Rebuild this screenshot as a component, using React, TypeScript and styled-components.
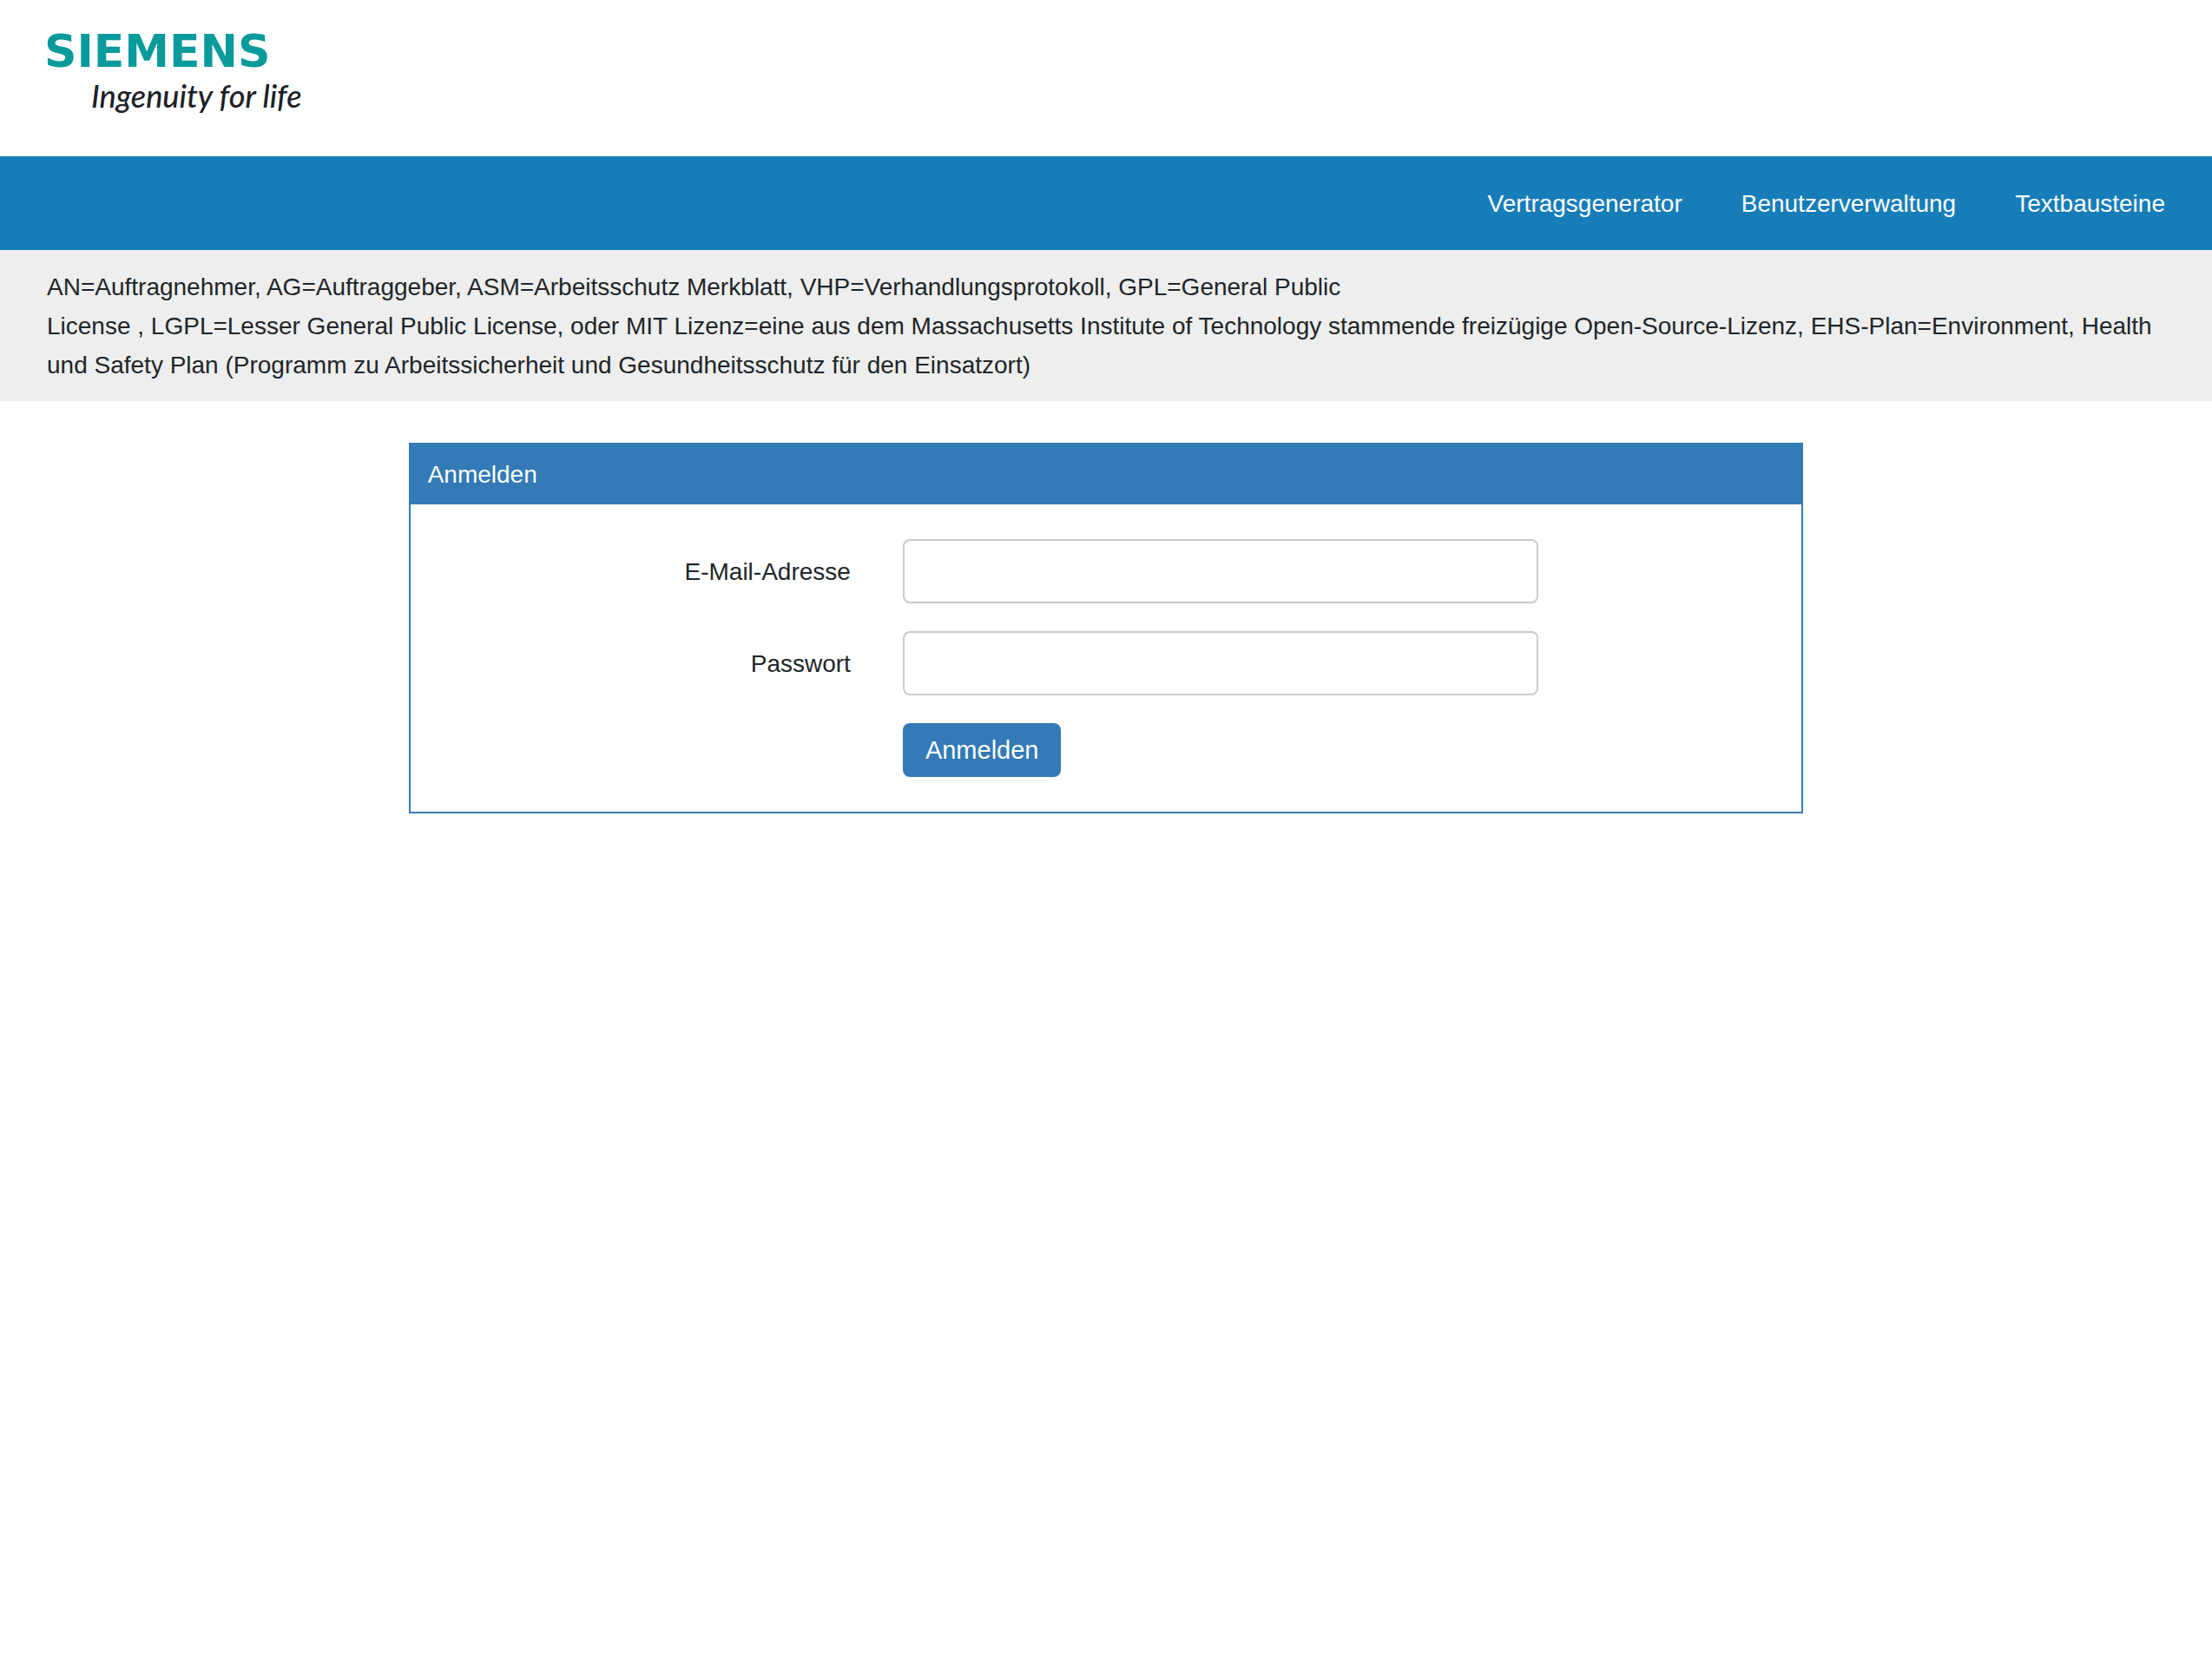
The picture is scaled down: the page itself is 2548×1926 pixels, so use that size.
import React from "react";
import styled, { createGlobalStyle } from "styled-components";

const GlobalStyle = createGlobalStyle`
  *, *::before, *::after { box-sizing: border-box; }
  body {
    margin: 0;
    background: #fff;
    color: #212529;
    font-family: "Liberation Sans", Arial, sans-serif;
    font-size: 28px;
    line-height: 45px;
  }
`;

const Header = styled.header`
  padding: 36px 54px 40px;
`;

const HomeLink = styled.a`
  display: inline-block;
  vertical-align: top;
`;

const LogoSvg = styled.svg`
  display: block;
  width: 304px;
  height: 104px;
  overflow: visible;
`;

const Wordmark = styled.text`
  fill: #099a9b;
  font-family: "DejaVu Sans", sans-serif;
  font-size: 52px;
  font-weight: 700;
`;

const Tagline = styled.text`
  fill: #1c2126;
  font-family: Lato, sans-serif;
  font-size: 36px;
  font-style: italic;
  font-weight: 500;
`;

const Nav = styled.nav`
  display: flex;
  justify-content: flex-end;
  align-items: center;
  gap: 68px;
  min-height: 108px;
  padding: 0 54px;
  background: #177db9;
`;

const NavLink = styled.a`
  color: #fff;
  text-decoration: none;
`;

const Notice = styled.p`
  margin: 0;
  padding: 20px 54px 19px;
  background: #eee;
`;

const Main = styled.main`
  display: grid;
  grid-template-columns: repeat(12, minmax(0, 1fr));
  column-gap: 60px;
  padding: 48px 54px;
`;

const Panel = styled.section`
  grid-column: 3 / span 8;
  border: 2px solid #337ab7;
`;

const PanelTitle = styled.h1`
  margin: 0;
  padding: 12px 20px;
  background: #337ab7;
  color: #fff;
  font-size: 28px;
  font-weight: 400;
`;

const Form = styled.form`
  display: grid;
  grid-template-columns: repeat(12, minmax(0, 1fr));
  gap: 32px 60px;
  align-items: center;
  padding: 40px 39px;
`;

const Label = styled.label`
  grid-column: 1 / span 4;
  text-align: right;
`;

const Field = styled.input`
  grid-column: 5 / span 6;
  width: 100%;
  height: 74px;
  padding: 12px 24px;
  border: 2px solid #c8cccc;
  border-radius: 8px;
  background: #fff;
  color: inherit;
  font: inherit;
`;

const SubmitButton = styled.button`
  grid-column: 5 / span 6;
  justify-self: start;
  height: 62px;
  padding: 0 24px;
  border: 2px solid #337ab7;
  border-radius: 8px;
  background: #337ab7;
  color: #fff;
  font-family: inherit;
  font-size: 29px;
  cursor: pointer;
`;

const links = ["Vertragsgenerator", "Benutzerverwaltung", "Textbausteine"];

function Logo() {
  return (
    <LogoSvg viewBox="0 0 304 104" role="img" aria-label="Siemens">
      <Wordmark x="-3" y="41">SIEMENS</Wordmark>
      <Tagline x="51" y="88">Ingenuity for life</Tagline>
    </LogoSvg>
  );
}

export default function App() {
  return (
    <>
      <GlobalStyle />
      <Header>
        <HomeLink href="#">
          <Logo />
        </HomeLink>
      </Header>
      <Nav>
        {links.map((name) => (
          <NavLink key={name} href="#">
            {name}
          </NavLink>
        ))}
      </Nav>
      <Notice>
        AN=Auftragnehmer, AG=Auftraggeber, ASM=Arbeitsschutz Merkblatt, VHP=Verhandlungsprotokoll, GPL=General Public
        <br />
        License , LGPL=Lesser General Public License, oder MIT Lizenz=eine aus dem Massachusetts Institute of
        Technology stammende freizügige Open-Source-Lizenz, EHS-Plan=Environment, Health und Safety Plan (Programm zu
        Arbeitssicherheit und Gesundheitsschutz für den Einsatzort)
      </Notice>
      <Main>
        <Panel>
          <PanelTitle>Anmelden</PanelTitle>
          <Form onSubmit={(event) => event.preventDefault()}>
            <Label htmlFor="email">E-Mail-Adresse</Label>
            <Field id="email" type="email" />
            <Label htmlFor="password">Passwort</Label>
            <Field id="password" type="password" />
            <SubmitButton type="submit">Anmelden</SubmitButton>
          </Form>
        </Panel>
      </Main>
    </>
  );
}
